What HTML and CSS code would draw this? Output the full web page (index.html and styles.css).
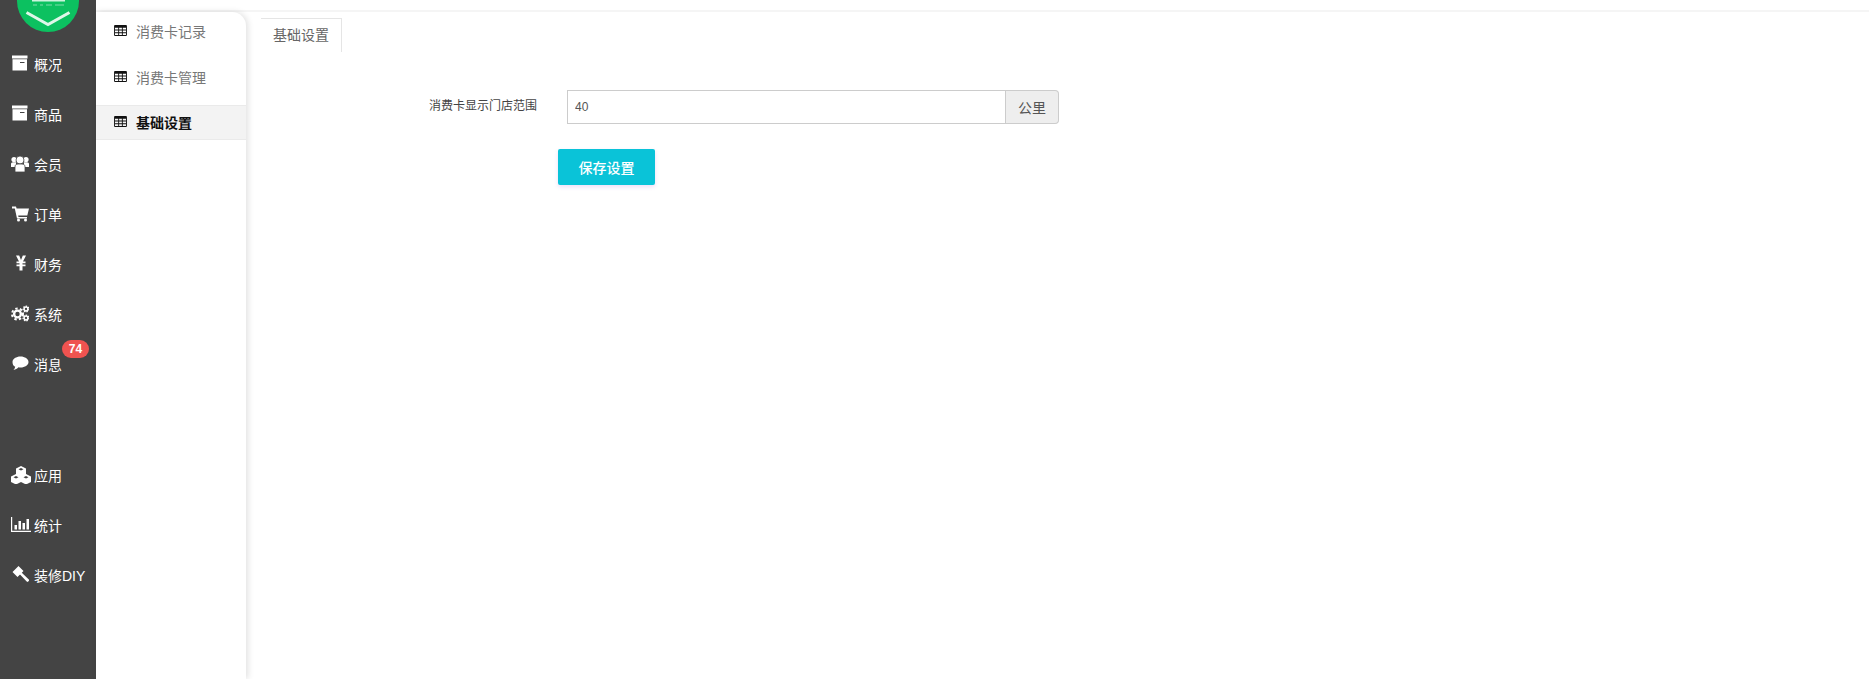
FILE: index.html
```html
<!DOCTYPE html>
<html lang="zh-CN">
<head>
    <meta charset="UTF-8">
    <title>基础设置</title>
    <link rel="stylesheet" href="styles.css">
</head>
<body>
    <div class="sidebar">
        <div class="logo">
            <svg viewBox="0 0 62 62" width="62" height="62">
                <circle cx="31" cy="31" r="31" fill="#0cc160"/>
                <rect x="15" y="30" width="33" height="1.500" fill="#cdf3dd"/>
                <rect x="16" y="34.500" width="4" height="1" fill="#7fdca9"/>
                <rect x="23" y="34.500" width="3" height="1" fill="#7fdca9"/>
                <rect x="29" y="34.500" width="6" height="1" fill="#7fdca9"/>
                <rect x="38" y="34.500" width="9" height="1" fill="#7fdca9"/>
                <path d="M9.500 42.500L31 54.500l21.500-12" fill="none" stroke="#dff7e9" stroke-width="3"/>
            </svg>
        </div>
        <ul class="menu">
            <li>
                <svg class="menu-icon" viewBox="0 0 18 16"><path fill-rule="evenodd" d="M1 0h15.500v3H1zM1.500 3.800h14.500V15H1.500zM9 6.500v1h4.500v-1z"/></svg>
                概况
            </li>
            <li>
                <svg class="menu-icon" viewBox="0 0 18 16"><path fill-rule="evenodd" d="M1 0h15.500v3H1zM1.500 3.800h14.500V15H1.500zM9 6.500v1h4.500v-1z"/></svg>
                商品
            </li>
            <li>
                <svg class="menu-icon" viewBox="0 0 18 17">
                    <circle cx="3" cy="4.500" r="2.600"/>
                    <circle cx="15" cy="4.500" r="2.600"/>
                    <path d="M0 12V9c0-1 .8-1.700 2-1.700h3V12zM18 12V9c0-1-.8-1.700-2-1.700h-3V12z"/>
                    <circle cx="9" cy="5" r="4" stroke="#444" stroke-width=".8"/>
                    <path d="M4 17v-5c0-2 1-3 3-3h4c2 0 3 1 3 3v5z" stroke="#444" stroke-width=".8"/>
                </svg>
                会员
            </li>
            <li>
                <svg class="menu-icon" viewBox="0 0 18 16"><path d="M1 1h4l.6 2H18l-1.700 7H7.200l.3 1.500H16V13H6L3.800 3H1z"/><circle cx="7.500" cy="14.500" r="1.500"/><circle cx="14.500" cy="14.500" r="1.500"/></svg>
                订单
            </li>
            <li>
                <svg class="menu-icon" viewBox="0 0 18 16"><path d="M5 0h3.200L10 4.500 11.800 0H15l-3 6h2.500v1.700h-3V9h3v1.700h-3V15H8.500v-4.300h-3V9h3V7.700h-3V6H8z"/></svg>
                财务
            </li>
            <li>
                <svg class="menu-icon" viewBox="0 0 18 16">
                    <circle class="gear" cx="6.500" cy="8.500" r="3.400" stroke-width="2.400"/>
                    <circle class="gear-teeth" cx="6.500" cy="8.500" r="5.500" stroke-width="2"/>
                    <circle class="gear-small" cx="15" cy="3.500" r="1.900" stroke-width="1.500"/>
                    <circle class="gear-small-teeth" cx="15" cy="3.500" r="2.900" stroke-width="1.300"/>
                    <circle class="gear-small" cx="15" cy="12.500" r="1.900" stroke-width="1.500"/>
                    <circle class="gear-small-teeth" cx="15" cy="12.500" r="2.900" stroke-width="1.300"/>
                </svg>
                系统
            </li>
            <li class="has-badge">
                <svg class="menu-icon" viewBox="0 0 18 16"><path d="M9.500 1c4.400 0 8 2.400 8 5.500s-3.600 5.500-8 5.500c-.7 0-1.400 0-2-.2-1.300 1.300-3 2.200-5 2.700.9-1 1.500-2 1.700-3.200C2.400 10.500 1.500 8.600 1.500 6.500 1.500 3.400 5.100 1 9.500 1z"/></svg>
                消息
                <span class="badge">74</span>
            </li>
        </ul>
        <ul class="menu menu-lower">
            <li>
                <svg class="menu-icon menu-icon-wide" viewBox="0 0 22 18"><path fill-rule="evenodd" d="M11 0l5 2.500v5.500l-5 2.500L6 8V2.500zM6 8l5 2.500V16l-5 2.500L1 16v-5.500zM16 8l5 2.500V16l-5 2.500L11 16v-5.500zM8.500 3.200L11 4.500l2.500-1.300L11 2zM3.500 11.200L6 12.500l2.500-1.300L6 10zM13.500 11.200L16 12.500l2.500-1.300L16 10z"/></svg>
                应用
            </li>
            <li>
                <svg class="menu-icon menu-icon-wide" viewBox="0 0 22 18"><path d="M1 1h1.200v13.800H21V16H1z"/><path d="M4.500 9h2.500v4.500H4.500zM8.500 5h2.500v8.500H8.500zM12.500 7h2.500v6.500h-2.500zM16.500 3h2.500v10.500h-2.500z"/></svg>
                统计
            </li>
            <li>
                <svg class="menu-icon" viewBox="0 0 18 17"><path d="M7.500 0l5 5-6 6-5-5zM9 8.500l1.800-1.800 7 6.800c.5.500.5 1 0 1.500l-.6.600c-.5.500-1 .5-1.500 0z"/></svg>
                装修DIY
            </li>
        </ul>
    </div>

    <div class="right">
        <div class="topbar"></div>
        <div class="panels">
            <div class="subnav">
                <a class="subnav-item">
                    <svg class="table-icon" viewBox="0 0 14 12"><path fill-rule="evenodd" d="M1 0h12a1 1 0 0 1 1 1v10a1 1 0 0 1-1 1H1a1 1 0 0 1-1-1V1a1 1 0 0 1 1-1zM1 3v2h3.500V3zm4.500 0v2h3V3zm4 0v2H13V3zM1 6v2h3.500V6zm4.500 0v2h3V6zm4 0v2H13V6zM1 9v2h3.500V9zm4.500 0v2h3V9zm4 0v2H13V9z"/></svg>
                    消费卡记录
                </a>
                <a class="subnav-item">
                    <svg class="table-icon" viewBox="0 0 14 12"><path fill-rule="evenodd" d="M1 0h12a1 1 0 0 1 1 1v10a1 1 0 0 1-1 1H1a1 1 0 0 1-1-1V1a1 1 0 0 1 1-1zM1 3v2h3.500V3zm4.500 0v2h3V3zm4 0v2H13V3zM1 6v2h3.500V6zm4.500 0v2h3V6zm4 0v2H13V6zM1 9v2h3.500V9zm4.500 0v2h3V9zm4 0v2H13V9z"/></svg>
                    消费卡管理
                </a>
                <a class="subnav-item active">
                    <svg class="table-icon" viewBox="0 0 14 12"><path fill-rule="evenodd" d="M1 0h12a1 1 0 0 1 1 1v10a1 1 0 0 1-1 1H1a1 1 0 0 1-1-1V1a1 1 0 0 1 1-1zM1 3v2h3.500V3zm4.500 0v2h3V3zm4 0v2H13V3zM1 6v2h3.500V6zm4.500 0v2h3V6zm4 0v2H13V6zM1 9v2h3.500V9zm4.500 0v2h3V9zm4 0v2H13V9z"/></svg>
                    基础设置
                </a>
            </div>
            <div class="main">
                <div class="tabs">
                    <span class="tab">基础设置</span>
                </div>
                <form class="form">
                    <div class="form-row">
                        <label class="form-label">消费卡显示门店范围</label>
                        <div class="input-group">
                            <input class="form-input" type="text" value="40">
                            <span class="input-addon">公里</span>
                        </div>
                    </div>
                    <button class="save-btn" type="button">保存设置</button>
                </form>
            </div>
        </div>
    </div>
</body>
</html>
```

FILE: styles.css
```css
* {
    padding: 0;
    margin: 0;
    box-sizing: border-box;
}
html, body {
    height: 100%;
    overflow: hidden;
}
body {
    display: flex;
    background: #fff;
    color: #333;
    font-family: "Noto Sans CJK SC", "Liberation Sans", sans-serif;
    font-size: 14px;
}
ul {
    list-style: none;
}

.sidebar {
    width: 96px;
    flex-shrink: 0;
    background: #444;
    color: #fff;
}
.logo {
    height: 32px;
    overflow: hidden;
    padding-left: 17px;
    display: flex;
    align-items: flex-end;
}
.logo svg {
    flex-shrink: 0;
}
.menu {
    padding-top: 8px;
}
.menu-lower {
    padding-top: 61px;
}
.menu li {
    height: 50px;
    display: flex;
    align-items: center;
    padding-left: 11px;
    padding-bottom: 2px;
    column-gap: 5px;
    position: relative;
    white-space: nowrap;
    font-family: "Liberation Sans", "Noto Sans CJK SC", sans-serif;
}
.menu-icon {
    width: 18px;
    height: 17px;
    fill: #fff;
    flex-shrink: 0;
    margin-top: -1px;
}
.menu-icon-wide {
    width: 22px;
    height: 18px;
    margin-left: -1px;
    margin-right: -3px;
}
.gear, .gear-teeth, .gear-small, .gear-small-teeth {
    fill: none;
    stroke: #fff;
}
.gear-teeth {
    stroke-dasharray: 2.400 2.200;
}
.gear-small-teeth {
    stroke-dasharray: 1.400 1.200;
}
.badge {
    position: absolute;
    left: 62px;
    top: 0;
    width: 27px;
    height: 18px;
    border-radius: 9px;
    background: #ef5350;
    color: #fff;
    font-size: 12px;
    font-weight: 700;
    line-height: 18px;
    text-align: center;
}

.right {
    flex: 1;
    display: flex;
    flex-direction: column;
}
.topbar {
    height: 12px;
    background: #fff;
    border-bottom: 2px solid #f5f5f5;
}
.panels {
    flex: 1;
    display: flex;
    column-gap: 4px;
}
.subnav {
    width: 150px;
    background: #fff;
    border-top-right-radius: 14px;
    box-shadow: 2px 0 6px rgba(0, 0, 0, .12);
}
.subnav-item {
    height: 45px;
    display: flex;
    align-items: center;
    padding-left: 18px;
    padding-bottom: 6px;
    column-gap: 9px;
    color: #777;
}
.subnav-item:first-child {
    padding-bottom: 8px;
}
.subnav-item.active {
    height: 35px;
    margin-top: 3px;
    padding-bottom: 2px;
    background: #f3f3f3;
    border-top: 1px solid #eaeaea;
    border-bottom: 1px solid #eaeaea;
    color: #111;
    font-weight: 700;
}
.table-icon {
    width: 13px;
    height: 11px;
    fill: #111;
    margin-top: -1px;
}

.main {
    flex: 1;
    padding: 6px 0 0 11px;
}
.tabs {
    display: flex;
}
.tab {
    width: 81px;
    height: 34px;
    border-top: 1px solid #e5e5e5;
    border-right: 1px solid #e5e5e5;
    color: #666;
    text-align: center;
    line-height: 31px;
}
.form-row {
    display: flex;
    align-items: center;
    margin-top: 38px;
}
.form-label {
    width: 276px;
    text-align: right;
    font-size: 12px;
    color: #444;
    margin-top: -5px;
}
.input-group {
    margin-left: 30px;
    width: 492px;
    height: 34px;
    display: flex;
}
.form-input {
    flex: 1;
    min-width: 0;
    border: 1px solid #ccc;
    padding: 0 7px;
    font-size: 12px;
    font-family: "Liberation Sans", sans-serif;
    color: #555;
    outline: none;
}
.input-addon {
    width: 53px;
    background: #eee;
    border: 1px solid #ccc;
    border-left: none;
    border-radius: 0 4px 4px 0;
    color: #555;
    text-align: center;
    line-height: 32px;
}
.save-btn {
    display: block;
    width: 97px;
    height: 36px;
    margin: 25px 0 0 297px;
    background: #0ac3d8;
    color: #fff;
    border: none;
    border-radius: 2px;
    font-family: inherit;
    font-size: 14px;
    font-weight: 500;
    box-shadow: 0 2px 4px rgba(160, 80, 220, .18);
}
```
